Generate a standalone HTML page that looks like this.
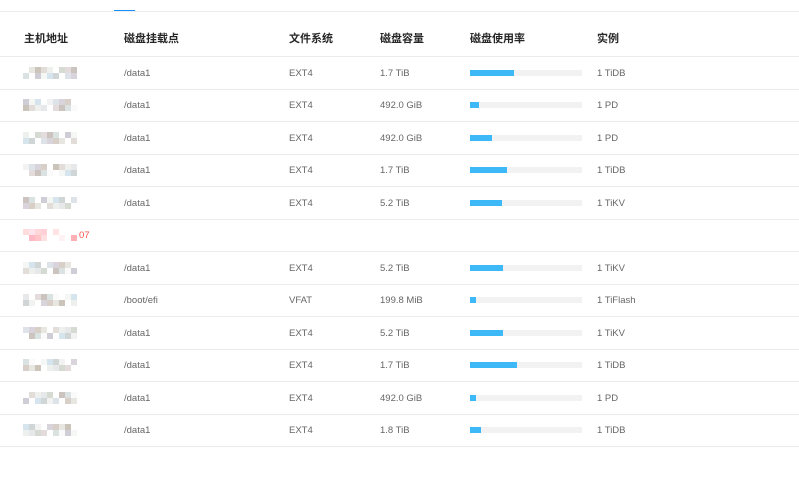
<!DOCTYPE html>
<html><head><meta charset="utf-8"><style>
body{margin:0;background:#fff;width:799px;height:490px;overflow:hidden;position:relative;font-family:"Liberation Sans","Noto Sans CJK SC",sans-serif}
.a{position:absolute}
.line{position:absolute;left:0;width:799px;height:1px;background:#ececec}
.h{position:absolute;top:32px;font-size:11px;font-weight:bold;color:#262626;line-height:14px}
.t{position:absolute;font-size:9.5px;color:#666;line-height:12px}
.bar{position:absolute;left:470px;width:112px;height:6px;background:#f2f2f2}
.bar i{display:block;height:6px;background:#3cb9f6}
.ip{position:absolute;left:23px;width:54px;height:12px;display:grid;grid-template-columns:repeat(9,6px);grid-template-rows:6px 6px}
.ip b{display:block}
</style></head><body>
<div class="line" style="top:11px"></div>
<div class="a" style="left:114px;top:10px;width:21px;height:1px;background:#1890ff"></div>
<div class="h" style="left:24px">主机地址</div>
<div class="h" style="left:124px">磁盘挂载点</div>
<div class="h" style="left:289px">文件系统</div>
<div class="h" style="left:380px">磁盘容量</div>
<div class="h" style="left:470px">磁盘使用率</div>
<div class="h" style="left:597px">实例</div>
<div id="rows"></div>
<script>
(function(){
var d=[["/data1","EXT4","1.7 TiB",44,"1 TiDB"],["/data1","EXT4","492.0 GiB",9,"1 PD"],["/data1","EXT4","492.0 GiB",22,"1 PD"],["/data1","EXT4","1.7 TiB",37,"1 TiDB"],["/data1","EXT4","5.2 TiB",32,"1 TiKV"],null,["/data1","EXT4","5.2 TiB",33,"1 TiKV"],["/boot/efi","VFAT","199.8 MiB",6,"1 TiFlash"],["/data1","EXT4","5.2 TiB",33,"1 TiKV"],["/data1","EXT4","1.7 TiB",47,"1 TiDB"],["/data1","EXT4","492.0 GiB",6,"1 PD"],["/data1","EXT4","1.8 TiB",11,"1 TiDB"]];
var cols=["#d8cfc8","#d6e4ee","#cbc3bd","#e2ddd8","#dde3e8","#cfcdd6","#d5dad3","#e8e6e0","#d0d6d6","#dbe2e2","#eef0ee","#d9d4dc","#f5f7f4","#e4dcdc","#cbc4ba","#f2f2f2","#fafafa","#e6e8ea"];
var pink=["#ffb0b4","#ffe0e2","#fff","#ffd6da","#fff2f4","#ffb8c4","#ffe4e4","#ffdcdc","#fff","#fff","#ffd0d6","#fff","#ffc4c8","#fff","#ffe4ee","#fff","#fff","#fff"];
var h="";
for(var i=0;i<12;i++){
 var y0=56+i*32.5, c=y0+16.5;
 h+='<div class="line" style="top:'+Math.round(y0)+'px"></div>';
 var g='';for(var k=0;k<18;k++){var cl=(i==5?pink:cols)[(k*7+i*5)%18];if(i!=5&&(k*3+i)%5==0)cl='#fff';g+='<b style="background:'+cl+'"></b>';}
 h+='<div class="ip" style="top:'+Math.round(c-6)+'px">'+g+'</div>';
 if(i==5){h+='<div class="t" style="left:79px;top:'+Math.round(c-5)+'px;color:#ff4d4f">07</div>';continue;}
 var r=d[i];
 h+='<div class="t" style="left:124px;top:'+Math.round(c-5)+'px">'+r[0]+'</div>';
 h+='<div class="t" style="left:289px;top:'+Math.round(c-5)+'px">'+r[1]+'</div>';
 h+='<div class="t" style="left:380px;top:'+Math.round(c-5)+'px">'+r[2]+'</div>';
 h+='<div class="bar" style="top:'+Math.round(c-3)+'px"><i style="width:'+r[3]+'px"></i></div>';
 h+='<div class="t" style="left:597px;top:'+Math.round(c-5)+'px">'+r[4]+'</div>';
}
h+='<div class="line" style="top:446px"></div>';
document.getElementById("rows").innerHTML=h;
})();
</script>
</body></html>
